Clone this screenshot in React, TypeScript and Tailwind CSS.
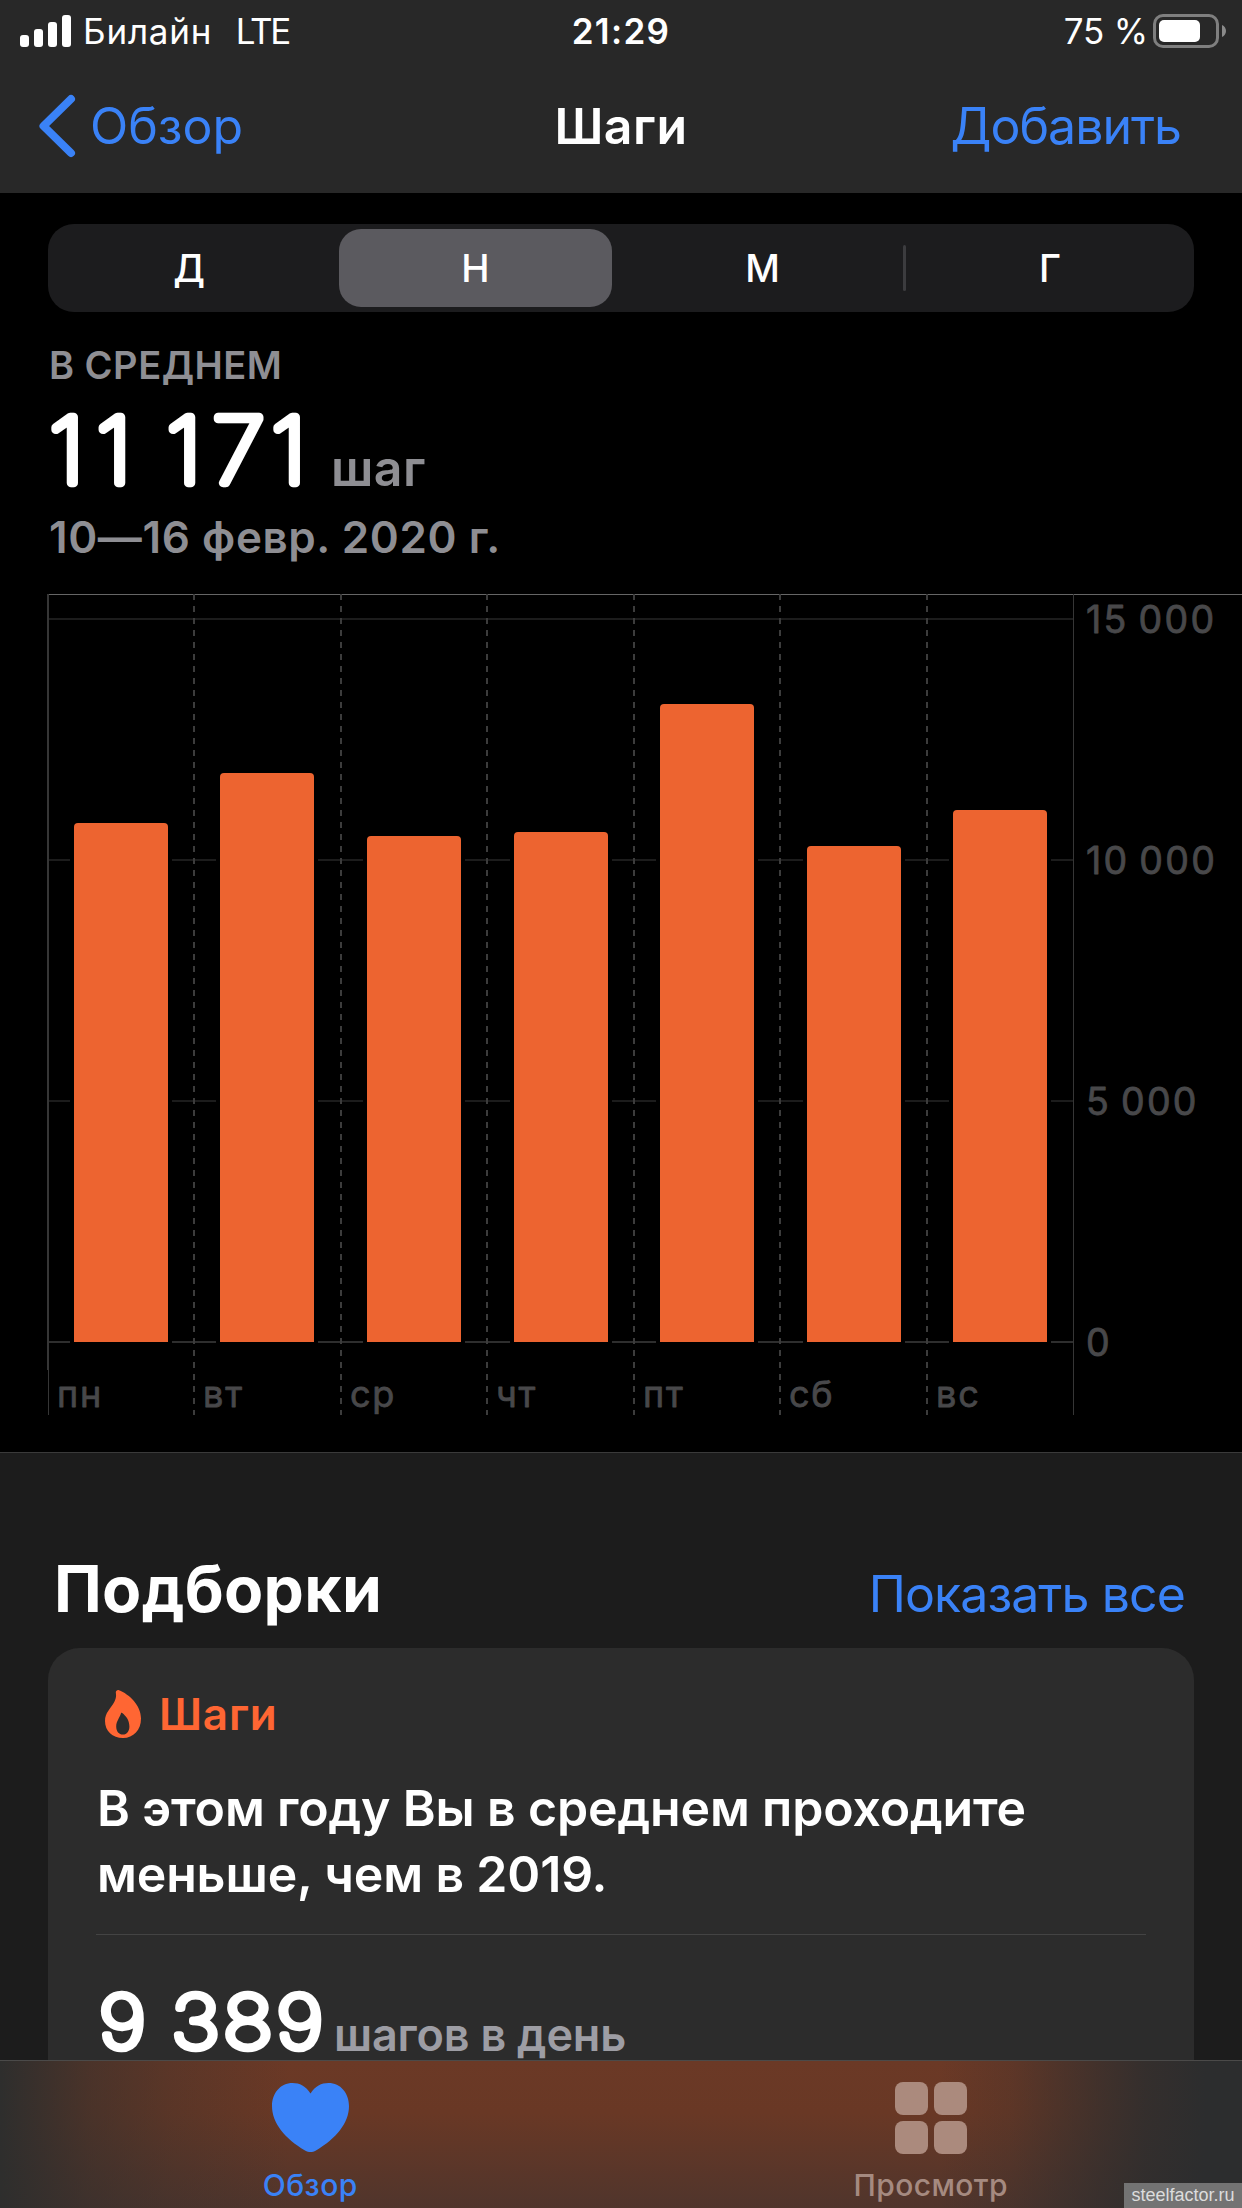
import { useState } from 'react';

type Range = 'Д' | 'Н' | 'М' | 'Г';

interface DayBar {
	day: string;
	/** Left edge of the day column */
	column: number;
	/** Left edge of the bar */
	x: number;
	/** Top edge of the bar */
	y: number;
}

const days: DayBar[] = [
	{ day: 'пн', column: 48, x: 74, y: 229 },
	{ day: 'вт', column: 194, x: 220, y: 179 },
	{ day: 'ср', column: 341, x: 367, y: 242 },
	{ day: 'чт', column: 487, x: 514, y: 238 },
	{ day: 'пт', column: 634, x: 660, y: 110 },
	{ day: 'сб', column: 780, x: 807, y: 252 },
	{ day: 'вс', column: 927, x: 953, y: 216 },
];

const levels = [
	{ label: '15 000', y: 25, color: '#1c1c1c' },
	{ label: '10 000', y: 266, color: '#1c1c1c' },
	{ label: '5 000', y: 507, color: '#1c1c1c' },
	{ label: '0', y: 748, color: '#2e2e2e' },
];

const BAR_WIDTH = 94;
const BASELINE = 748;

interface RoundedNumberProps {
	value: string;
	size: number;
	width: number;
	height: number;
	/** Start of each character, space separated */
	advances: string;
	left: number;
	stretch: number;
	stroke: number;
}

/** Large number with rounded stroke ends */
function RoundedNumber({ value, size, width, height, advances, left, stretch, stroke }: RoundedNumberProps) {
	return (
		<svg width={width} height={height} className="shrink-0 overflow-visible">
			<text
				x={advances}
				transform={`translate(${left} ${height - 3}) scale(${stretch} 1)`}
				fontSize={size}
				fontWeight="100"
				fill="#fff"
				stroke="#fff"
				strokeWidth={stroke}
				strokeLinejoin="round"
			>
				{value}
			</text>
		</svg>
	);
}

function StatusBar() {
	return (
		<div className="grid h-[62px] grid-cols-[1fr_auto_1fr] items-center px-4 text-[35px] leading-none">
			<div className="flex items-center pl-1">
				<svg width="51" height="32" className="mr-3" fill="#fff">
					<rect x="0" y="20" width="9" height="12" rx="3" />
					<rect x="14" y="14" width="9" height="18" rx="3" />
					<rect x="28" y="7" width="9" height="25" rx="3" />
					<rect x="42" y="0" width="9" height="32" rx="3" />
				</svg>
				<span className="tracking-[0.8px]">Билайн</span>
				<span className="ml-[23.5px] tracking-[-2.3px]">LTE</span>
			</div>
			<span className="font-semibold tracking-[1.3px]">21:29</span>
			<div className="flex items-center justify-end">
				<span className="mr-[5px] tracking-[-0.2px]">75 %</span>
				<svg width="73" height="34">
					<rect x="1.5" y="1.5" width="63" height="31" rx="8.5" fill="none" stroke="#7f7f7f" strokeWidth="3" />
					<rect x="6" y="6" width="41" height="22" rx="5" fill="#fff" />
					<path d="M69 11c2.600 1.200 4 3.400 4 6s-1.400 4.800-4 6z" fill="#8a8a8a" />
				</svg>
			</div>
		</div>
	);
}

function NavBar() {
	return (
		<div className="grid h-[131px] grid-cols-[1fr_auto_1fr] items-center px-[38px] pb-[3px] text-[50px] leading-none">
			<button className="flex items-center text-[#3a82f7]">
				<svg width="38" height="64" fill="none" stroke="currentColor" strokeWidth="8">
					<path d="M33 5L5.500 32L33 59" strokeLinecap="round" strokeLinejoin="round" />
				</svg>
				<span className="ml-[14px]">Обзор</span>
			</button>
			<h1 className="font-semibold tracking-[0.5px]">Шаги</h1>
			<button className="mr-[23px] justify-self-end tracking-[-1px] text-[#3a82f7]">Добавить</button>
		</div>
	);
}

function StepsChart() {
	return (
		<svg width="1242" height="858" viewBox="0 0 1242 858" className="mt-8 block">
			{/* Frame */}
			<rect x="48" y="0" width="1194" height="1" fill="#666" />
			<rect x="47" y="0" width="2" height="776" fill="#363636" />
			<rect x="48" y="776" width="1" height="45" fill="#363636" />
			<rect x="1073" y="0" width="1" height="821" fill="#363636" />

			{/* Levels */}
			{levels.map((level) => (
				<g key={level.label}>
					<rect x="49" y={level.y - 1} width="1024" height="2" fill={level.color} />
					<text
						x="1086"
						y={level.y + 13.5}
						fontSize="37.5"
						fontWeight="400"
						letterSpacing="2.3"
						wordSpacing="-3"
						fill="#48484a"
						stroke="#48484a"
						strokeWidth="0.8"
						strokeLinejoin="round"
					>
						{level.label}
					</text>
				</g>
			))}

			{/* Bars, with a dark gap that cuts the level lines */}
			{days.map((d) => (
				<g key={d.day}>
					<rect x={d.x - 4} y={d.y - 4} width={BAR_WIDTH + 8} height={BASELINE - d.y + 6} fill="#000" />
					<path
						d={`M${d.x} ${BASELINE}V${d.y + 4}a4 4 0 0 1 4 -4h${BAR_WIDTH - 8}a4 4 0 0 1 4 4V${BASELINE}z`}
						fill="#ed6430"
					/>
				</g>
			))}

			{/* Day columns */}
			{days.map((d, i) => (
				<g key={d.day}>
					{i > 0 && (
						<line
							x1={d.column}
							y1="0"
							x2={d.column}
							y2="821"
							stroke="#3c3c3c"
							strokeWidth="2"
							strokeDasharray="6 6"
						/>
					)}
					<text
						x={d.column + 9}
						y="813"
						fontSize="36"
						fontWeight="400"
						letterSpacing="1.8"
						fill="#48484a"
						stroke="#48484a"
						strokeWidth="0.8"
						strokeLinejoin="round"
					>
						{d.day}
					</text>
				</g>
			))}
		</svg>
	);
}

function FlameIcon() {
	return (
		<svg width="36" height="48" viewBox="0 0 36 48" fill="#ff6633">
			<path
				fillRule="evenodd"
				d="M10.800 2.500C10.800 .8 12.300 -.3 14 .2C24 4 36 15 36 28.500C36 40 28.500 48 18 48C7.500 48 0 41 0 31C0 22.500 5.500 19 9.500 11.500C11.200 8 11.300 5.500 10.800 2.500ZM16 23.200C14.600 28 11.200 31 11.200 36.500C11.200 41.500 14 44.600 17.900 44.600C22 44.600 24.400 41 24.400 36.500C24.400 30 20.800 25.800 17.200 23C16.600 22.600 16.200 22.700 16 23.200Z"
			/>
		</svg>
	);
}

function Highlights() {
	return (
		<section className="border-t border-[#3a3a3a] bg-[#1c1c1c] pt-24">
			<div className="flex h-20 items-baseline justify-between pl-[54px] pr-[57px]">
				<h2 className="text-[64px] font-bold leading-[80px] tracking-[0.3px]">Подборки</h2>
				<button className="text-[50px] leading-none tracking-[-0.9px] text-[#3a82f7]">Показать все</button>
			</div>
			<div className="mx-12 mt-[19px] h-[600px] rounded-[32px] bg-[#2c2c2c] px-12 pt-9">
				<div className="flex h-[60px] items-center pl-[9px]">
					<FlameIcon />
					<span className="ml-[18px] text-[44px] font-semibold leading-none tracking-[0.8px] text-[#ff6633]">
						Шаги
					</span>
				</div>
				<p className="mt-[31px] pl-px text-[50px] font-semibold leading-[66px] tracking-[-0.15px]">
					В этом году Вы в среднем проходите
					<br />
					меньше, чем в 2019.
				</p>
				<div className="mt-[27px] h-px bg-[#444]" />
				<div className="mt-14 flex items-baseline">
					<RoundedNumber
						value="9 389"
						size={72.5}
						width={238}
						height={60}
						advances="0 48 63.5 109 155.8"
						left={3}
						stretch={1.14}
						stroke={7.2}
					/>
					<span className="text-[45px] font-semibold leading-none tracking-[-0.2px] text-[#9d9da4]">
						шагов в день
					</span>
				</div>
			</div>
		</section>
	);
}

function TabBar() {
	return (
		<nav className="relative h-[148px] shrink-0 border-t border-[#4b4a49] bg-[linear-gradient(to_bottom,#6b3926_0%,#693825_35%,#50352c_100%)]">
			<div className="flex h-full bg-[linear-gradient(to_right,#2e2e2d_0px,#2e2e2dcc_40px,#2e2e2d88_90px,#2e2e2d44_170px,#2e2e2d00_290px,#2c2d2e00_940px,#2c2d2e33_1010px,#2c2d2e77_1060px,#2c2d2eaa_1100px,#2c2d2edd_1145px,#2c2d2e_1205px)] pr-px pt-[21px] text-[30px] font-medium leading-9">
				<button className="flex flex-1 flex-col items-center text-[#3a82f7]">
					<svg width="77" height="72" fill="currentColor">
						<path d="M38.500 11.500C34 4 27.500 1 20.500 1C8.500 1 0 11 0 24C0 41 13 56.500 33 68.500C37 70.600 40 70.600 44 68.500C64 56.500 77 41 77 24C77 11 68.500 1 56.500 1C49.500 1 43 4 38.500 11.500Z" />
					</svg>
					<span className="mt-[13px] tracking-[0.5px]">Обзор</span>
				</button>
				<button className="flex flex-1 flex-col items-center text-[#a58a80]">
					<svg width="72" height="72" fill="#ab8a7d">
						<rect x="0" y="0" width="33" height="33" rx="8" />
						<rect x="39" y="0" width="33" height="33" rx="8" />
						<rect x="0" y="39" width="33" height="33" rx="8" />
						<rect x="39" y="39" width="33" height="33" rx="8" />
					</svg>
					<span className="mt-[13px] tracking-[0.4px]">Просмотр</span>
				</button>
			</div>
			<div className="absolute bottom-0 right-0 h-[25px] w-[118px] bg-[#737373] text-center font-['Liberation_Sans',sans-serif] text-[18px] leading-[25px] text-[#dcdcdc]">
				steelfactor.ru
			</div>
		</nav>
	);
}

export default function App() {
	const [range, setRange] = useState<Range>('Н');

	const segmentClass = (value: Range) =>
		`flex flex-1 items-center justify-center rounded-[22px] ${range === value ? 'bg-[#5b5a5f]' : ''}`;

	return (
		<div className="flex h-[2208px] w-[1242px] flex-col overflow-hidden bg-black font-['Inter',sans-serif] text-white">
			<header className="shrink-0 bg-[#282828]">
				<StatusBar />
				<NavBar />
			</header>

			<main className="min-h-0 flex-1 overflow-hidden">
				{/* Range switch */}
				<div className="mx-12 mt-[31px] grid h-[88px] grid-cols-[284px_287px_287px_1fr] rounded-[26px] bg-[#1c1c1e] py-[5px] text-[38px] font-medium leading-none">
					<div className="flex pl-[5px] pr-[7px]">
						<button className={segmentClass('Д')} onClick={() => setRange('Д')}>
							Д
						</button>
					</div>
					<div className="flex px-[7px]">
						<button className={segmentClass('Н')} onClick={() => setRange('Н')}>
							Н
						</button>
					</div>
					<div className="flex items-stretch pl-[7px]">
						<button className={segmentClass('М')} onClick={() => setRange('М')}>
							М
						</button>
						<div className="ml-1 h-[46px] w-[3px] self-center rounded-full bg-[#3c3c3f]" />
					</div>
					<div className="flex px-[7px]">
						<button className={segmentClass('Г')} onClick={() => setRange('Г')}>
							Г
						</button>
					</div>
				</div>

				{/* Weekly average */}
				<div className="mt-[30px] pl-[49px] text-[#8e8e93]">
					<div className="text-[38px] font-semibold leading-[47px] tracking-[0.5px]">В СРЕДНЕМ</div>
					<div className="mt-6 flex h-[81px] items-baseline">
						<RoundedNumber
							value="11 171"
							size={91}
							width={282}
							height={73}
							advances="0 44.5 85 110.5 154 209.5"
							left={0}
							stretch={1.06}
							stroke={8.5}
						/>
						<span className="text-[50px] font-semibold leading-none tracking-[0.5px]">шаг</span>
					</div>
					<div className="mt-[18px] text-[44px] font-semibold leading-[50px] tracking-[0.6px]">
						10—16 февр. 2020 г.
					</div>
				</div>

				<StepsChart />
				<Highlights />
			</main>

			<TabBar />
		</div>
	);
}
